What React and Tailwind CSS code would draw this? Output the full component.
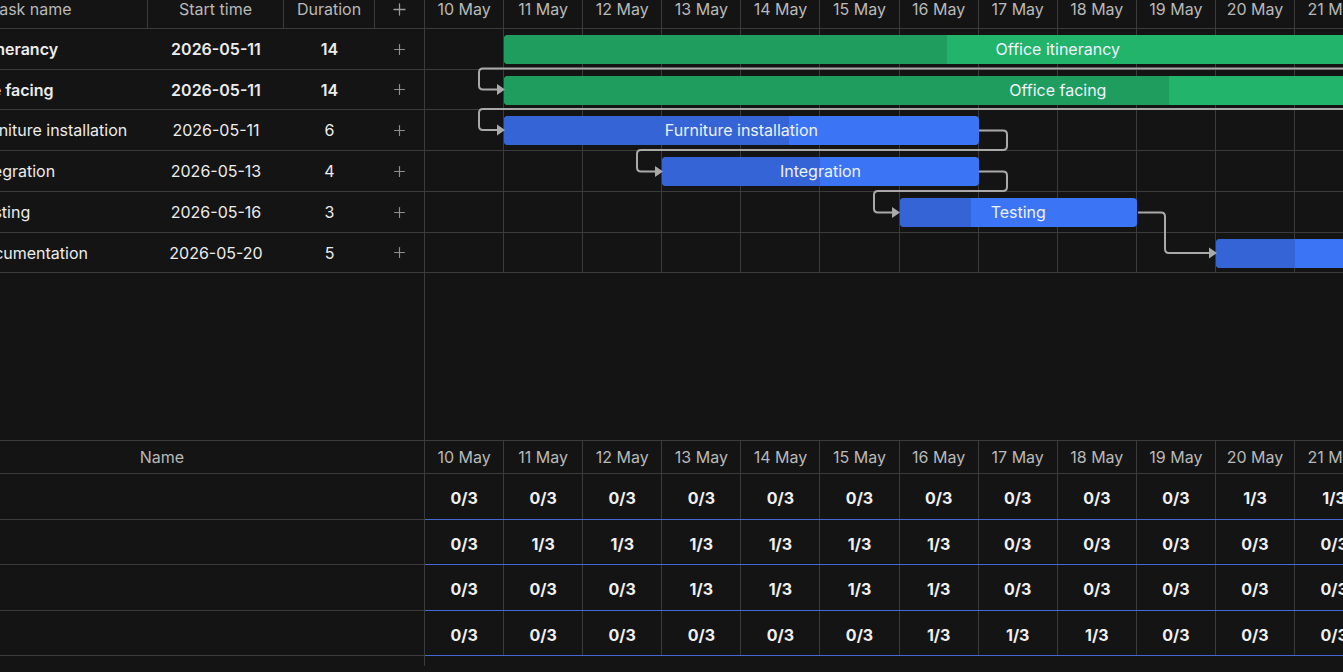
import React from 'react'
import { Plus } from 'lucide-react'

const DAY = 79.1
const days = [10, 11, 12, 13, 14, 15, 16, 17, 18, 19, 20, 21]
const rowHeights = ['h-[41px]', 'h-[40px]', 'h-[41px]', 'h-[41px]', 'h-[41px]', 'h-[40px]']
const rowTops = [0, 41, 81, 122, 163, 204]
const loadHeights = ['h-[46px]', 'h-[45px]', 'h-[46px]', 'h-[45px]']

const tasks = [
  { name: 'Office itinerancy', start: '2026-05-11', duration: 14, day: 11, progress: 0.4, color: 'green', bold: true, shift: 'ml-[-70px]' },
  { name: 'Office facing', start: '2026-05-11', duration: 14, day: 11, progress: 0.6, color: 'green', bold: true, shift: 'ml-[-46px]' },
  { name: 'Furniture installation', start: '2026-05-11', duration: 6, day: 11, progress: 0.6, color: 'blue', shift: 'ml-[-26px]' },
  { name: 'Integration', start: '2026-05-13', duration: 4, day: 13, progress: 0.5, color: 'blue', shift: 'ml-[-26px]' },
  { name: 'Testing', start: '2026-05-16', duration: 3, day: 16, progress: 0.3, color: 'blue', shift: 'ml-[-25px]' },
  { name: 'Documentation', start: '2026-05-20', duration: 5, day: 20, progress: 0.2, color: 'blue', shift: 'ml-[-27px]' },
]

const load = [
  ['0/3', '0/3', '0/3', '0/3', '0/3', '0/3', '0/3', '0/3', '0/3', '0/3', '1/3', '1/3'],
  ['0/3', '1/3', '1/3', '1/3', '1/3', '1/3', '1/3', '0/3', '0/3', '0/3', '0/3', '0/3'],
  ['0/3', '0/3', '0/3', '1/3', '1/3', '1/3', '1/3', '0/3', '0/3', '0/3', '0/3', '0/3'],
  ['0/3', '0/3', '0/3', '0/3', '0/3', '0/3', '1/3', '1/3', '1/3', '0/3', '0/3', '0/3'],
]

// link paths in chart-body coordinates (origin = first day column, first row top)
const links = [
  { d: 'M 1000 39.5 H 58 Q 54 39.5 54 43.5 V 56.5 Q 54 60.5 58 60.5 H 73', tip: [80, 60.5] },
  { d: 'M 1000 80 H 58 Q 54 80 54 84 V 97 Q 54 101 58 101 H 73', tip: [80, 101] },
  { d: 'M 554 101.5 H 578 Q 582 101.5 582 105.5 V 117 Q 582 121 578 121 H 216 Q 212 121 212 125 V 138.5 Q 212 142.5 216 142.5 H 231', tip: [238, 142.5] },
  { d: 'M 554 142.5 H 578 Q 582 142.5 582 146.5 V 158 Q 582 162 578 162 H 453 Q 449 162 449 166 V 179.5 Q 449 183.5 453 183.5 H 468', tip: [475, 183.5] },
  { d: 'M 713 183.5 H 736 Q 740 183.5 740 187.5 V 220 Q 740 224 744 224 H 785', tip: [792, 224] },
]

function Bar({ task, index }) {
  const left = (task.day - 10) * DAY
  const width = task.duration * DAY
  const dark = task.color === 'green' ? 'bg-[#1f9d5e]' : 'bg-[#3464d6]'
  const light = task.color === 'green' ? 'bg-[#22b46b]' : 'bg-[#3b74f5]'
  return (
    <div
      className={`absolute h-[29px] rounded-[4px] overflow-hidden ${light}`}
      style={{ left, width, top: rowTops[index] + 5.5 }}
    >
      <div className={`absolute inset-y-0 left-0 ${dark}`} style={{ width: width * task.progress }} />
      <div className="relative h-full flex items-center justify-center text-[16px] text-[#eef3ff] whitespace-nowrap">
        {task.name}
      </div>
    </div>
  )
}

export default function App() {
  return (
    <div className="w-[1343px] h-[672px] bg-[#141414] overflow-hidden text-[16px] font-['Inter','Liberation_Sans',sans-serif]">
      {/* Gantt */}
      <div className="flex h-[441px] border-b border-[#3b3b3b]">
        {/* Grid */}
        <div className="w-[425px] shrink-0 border-r border-[#3b3b3b] overflow-hidden">
          <div className="flex h-[29px] border-b border-[#3b3b3b] text-[#b9b9b9] leading-[18px]">
            <div className="w-[148px] border-r border-[#3b3b3b] overflow-hidden whitespace-nowrap">
              <span className="ml-[-10px]">Task name</span>
            </div>
            <div className="w-[136px] border-r border-[#3b3b3b] text-center">Start time</div>
            <div className="w-[91px] border-r border-[#3b3b3b] text-center">Duration</div>
            <div className="flex-1 flex justify-center">
              <Plus className="w-[19px] h-[19px] text-[#9a9a9a]" strokeWidth={1.6} />
            </div>
          </div>
          {tasks.map((t, i) => (
            <div key={t.name} className={`flex items-center ${rowHeights[i]} border-b border-[#3b3b3b] text-[#ececec]`}>
              <div className="w-[148px] overflow-hidden whitespace-nowrap">
                <span className={`inline-block ${t.shift} ${t.bold ? 'font-semibold' : ''}`}>{t.name}</span>
              </div>
              <div className={`w-[136px] text-center ${t.bold ? 'font-semibold' : ''}`}>{t.start}</div>
              <div className={`w-[91px] text-center ${t.bold ? 'font-semibold' : ''}`}>{t.duration}</div>
              <div className="flex-1 flex justify-center">
                <Plus className="w-[17px] h-[17px] text-[#8f8f8f]" strokeWidth={1.6} />
              </div>
            </div>
          ))}
        </div>

        {/* Chart */}
        <div className="flex-1 overflow-hidden">
          <div className="flex h-[29px] border-b border-[#3b3b3b] text-[#b9b9b9] leading-[18px]">
            {days.map((d) => (
              <div key={d} className="w-[79.1px] shrink-0 border-r border-[#3b3b3b] text-center whitespace-nowrap">
                {d} May
              </div>
            ))}
          </div>
          <div className="relative">
            {tasks.map((t, i) => (
              <div key={t.name} className={`flex ${rowHeights[i]} border-b border-[#3b3b3b]`}>
                {days.map((d) => (
                  <div key={d} className="w-[79.1px] shrink-0 border-r border-[#3b3b3b]" />
                ))}
              </div>
            ))}
            {tasks.map((t, i) => (
              <Bar key={t.name} task={t} index={i} />
            ))}
            <svg className="absolute left-0 top-0 overflow-visible pointer-events-none" width="920" height="260">
              {links.map((l, i) => (
                <g key={i}>
                  <path d={l.d} fill="none" stroke="#a9a9a9" strokeWidth="2" />
                  <path
                    d={`M ${l.tip[0]} ${l.tip[1]} L ${l.tip[0] - 8} ${l.tip[1] - 5.5} L ${l.tip[0] - 8} ${l.tip[1] + 5.5} Z`}
                    fill="#a9a9a9"
                  />
                </g>
              ))}
            </svg>
          </div>
        </div>
      </div>

      {/* Resource load */}
      <div className="flex">
        <div className="w-[425px] shrink-0 h-[225px] border-r border-[#3b3b3b]">
          <div className="h-[33px] border-b border-[#3b3b3b] flex items-center justify-center text-[#b9b9b9] pr-[100px]">
            Name
          </div>
          {load.map((_, i) => (
            <div key={i} className={`${loadHeights[i]} border-b border-[#3b3b3b]`} />
          ))}
        </div>
        <div className="flex-1 overflow-hidden">
          <div className="flex h-[33px] border-b border-[#3b3b3b] text-[#b9b9b9]">
            {days.map((d) => (
              <div key={d} className="w-[79.1px] shrink-0 border-r border-[#3b3b3b] flex items-center justify-center whitespace-nowrap">
                {d} May
              </div>
            ))}
          </div>
          {load.map((row, i) => (
            <div key={i} className={`flex ${loadHeights[i]} border-b border-[#4468d6]`}>
              {row.map((v, j) => (
                <div
                  key={j}
                  className="w-[79.1px] shrink-0 border-r border-[#3b3b3b] flex items-center justify-center pt-[3px] font-bold text-[#f0f0f0] whitespace-nowrap"
                >
                  {v}
                </div>
              ))}
            </div>
          ))}
        </div>
      </div>
    </div>
  )
}
